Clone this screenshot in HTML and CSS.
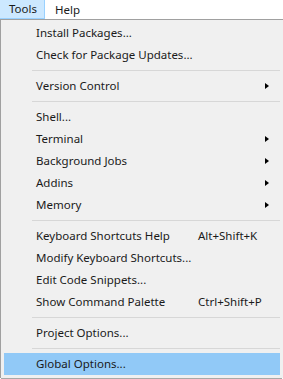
FILE: index.html
```html
<!DOCTYPE html>
<html lang="en">
<head>
    <meta charset="UTF-8">
    <meta name="viewport" content="width=device-width, initial-scale=1.0">
    <title>Tools Menu</title>
    <link rel="stylesheet" href="styles.css">
</head>
<body>
    <div class="menubar">
        <span class="menubar-item active">Tools</span>
        <span class="menubar-item">Help</span>
    </div>
    <div class="menu">
        <div class="item">Install Packages...</div>
        <div class="item">Check for Package Updates...</div>
        <div class="sep"></div>
        <div class="item sub">Version Control</div>
        <div class="sep"></div>
        <div class="item">Shell...</div>
        <div class="item sub">Terminal</div>
        <div class="item sub">Background Jobs</div>
        <div class="item sub">Addins</div>
        <div class="item sub">Memory</div>
        <div class="sep"></div>
        <div class="item">Keyboard Shortcuts Help<span class="key">Alt+Shift+K</span></div>
        <div class="item">Modify Keyboard Shortcuts...</div>
        <div class="item">Edit Code Snippets...</div>
        <div class="item">Show Command Palette<span class="key">Ctrl+Shift+P</span></div>
        <div class="sep"></div>
        <div class="item">Project Options...</div>
        <div class="sep"></div>
        <div class="item selected">Global Options...</div>
    </div>
</body>
</html>
```

FILE: styles.css
```css
body {
    margin: 0;
    background-color: #fff;
    font-family: "Noto Sans", sans-serif;
    font-size: 11.5px;
    color: #1a1a1a;
}
.menubar {
    display: flex;
    height: 19px;
    background-color: #fff;
}
.menubar-item {
    box-sizing: border-box;
    height: 19px;
    line-height: 17px;
    padding: 0 8px 0 9px;
    border: 1px solid transparent;
}
.menubar-item.active {
    width: 45px;
    background-color: #cce8ff;
    border-color: #99d1ff;
    border-left: none;
    border-top: none;
}
.menu {
    background-color: #f0f0f0;
    border-top: 1px solid #a0a0a0;
    border-left: 1px solid #a0a0a0;
    padding: 2px 3px 3px 3px;
    box-shadow: 0 3px 0 -1px #a8a8a8;
    margin-bottom: 4px;
}
.item {
    position: relative;
    height: 22px;
    line-height: 22px;
    padding-left: 32px;
    white-space: nowrap;
}
.item .key {
    position: absolute;
    left: 194px;
}
.item.sub::after {
    content: "";
    position: absolute;
    left: 261px;
    top: 8px;
    border-left: 4px solid #000;
    border-top: 3.5px solid transparent;
    border-bottom: 3.5px solid transparent;
}
.item.selected {
    background-color: #91c9f7;
}
.sep {
    height: 1px;
    margin: 4px 0 4px 28px;
    background-color: #d7d7d7;
}
```
